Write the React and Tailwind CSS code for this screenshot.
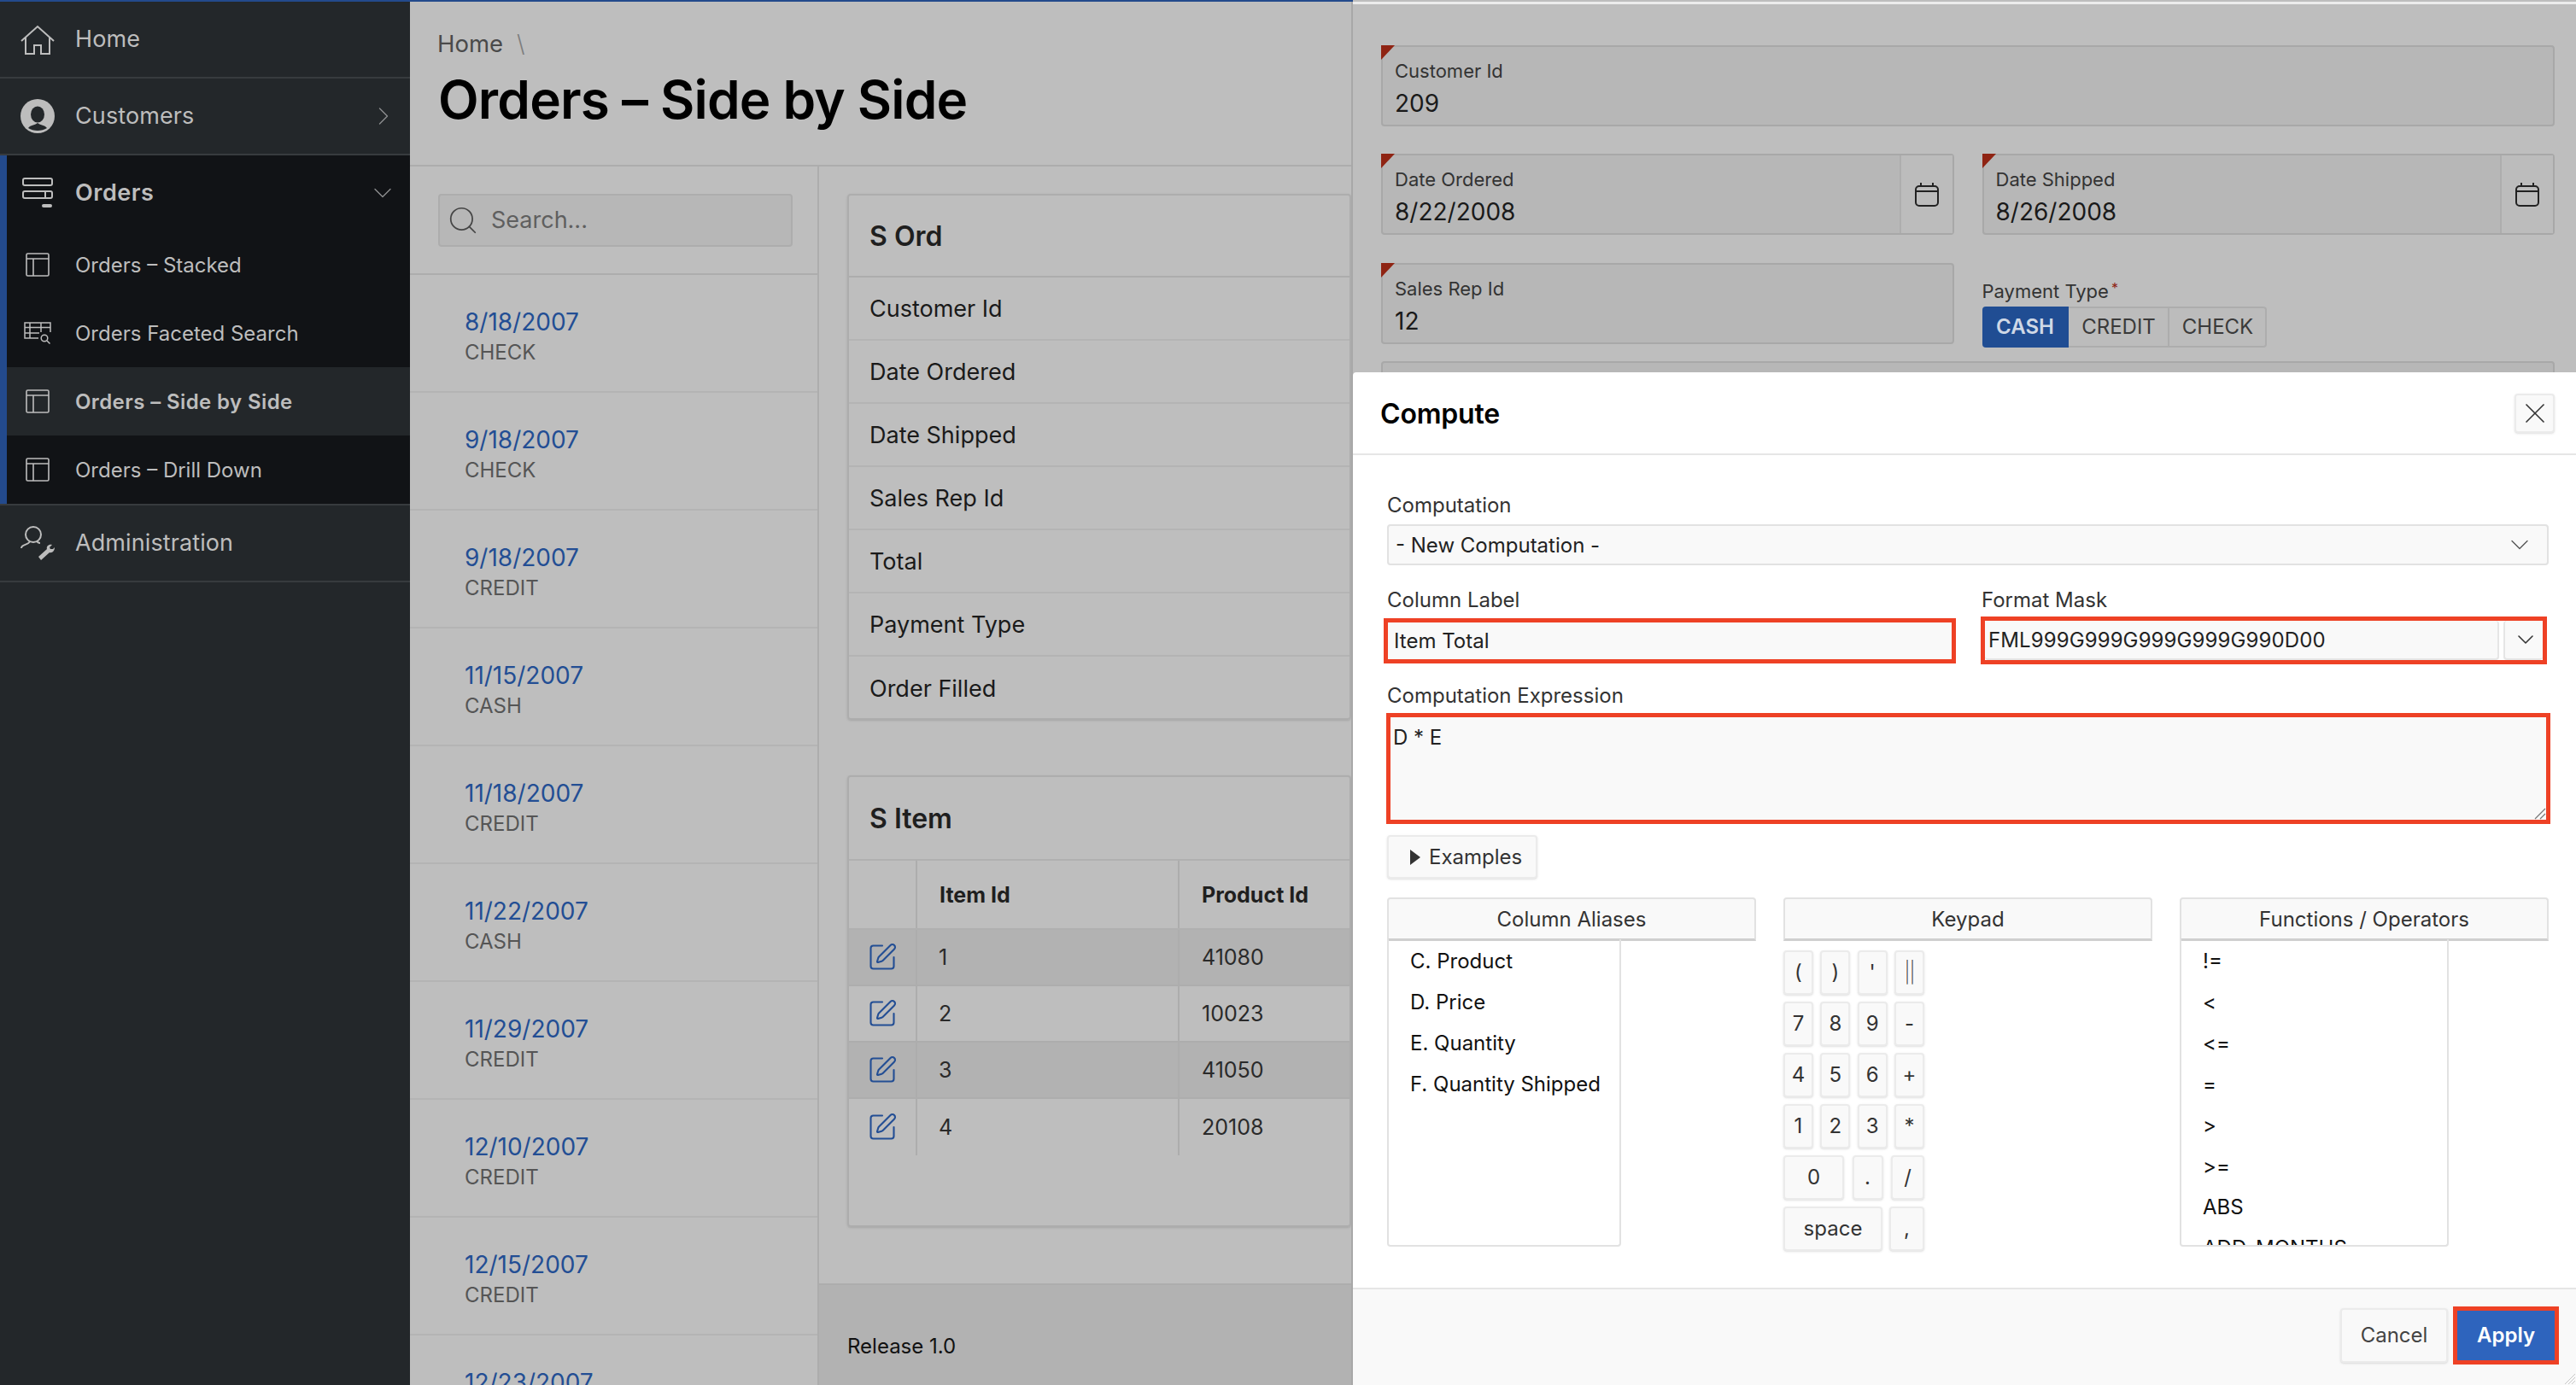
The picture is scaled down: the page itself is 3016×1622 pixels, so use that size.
import { ChevronDown, ChevronRight, Search, SquarePen, X } from "lucide-react";

const fontStack = "font-['Inter','Noto_Sans',sans-serif]";

const orders = [
  ["8/18/2007", "CHECK"],
  ["9/18/2007", "CHECK"],
  ["9/18/2007", "CREDIT"],
  ["11/15/2007", "CASH"],
  ["11/18/2007", "CREDIT"],
  ["11/22/2007", "CASH"],
  ["11/29/2007", "CREDIT"],
  ["12/10/2007", "CREDIT"],
  ["12/15/2007", "CREDIT"],
  ["12/23/2007", "CREDIT"],
];

const ordFields = ["Customer Id", "Date Ordered", "Date Shipped", "Sales Rep Id", "Total", "Payment Type", "Order Filled"];

const items = [
  ["1", "41080"],
  ["2", "10023"],
  ["3", "41050"],
  ["4", "20108"],
];

const aliases = ["C. Product", "D. Price", "E. Quantity", "F. Quantity Shipped"];
const functions = ["!=", "<", "<=", "=", ">", ">=", "ABS", "ADD_MONTHS"];

const keypad = [
  [["(", 35], [")", 35], ["'", 35], ["||", 35]],
  [["7", 35], ["8", 35], ["9", 35], ["-", 35]],
  [["4", 35], ["5", 35], ["6", 35], ["+", 35]],
  [["1", 35], ["2", 35], ["3", 35], ["*", 35]],
  [["0", 71], [".", 36], ["/", 39]],
  [["space", 116], [",", 41]],
];

const HomeIcon = () => (
  <svg width="40" height="35" viewBox="0 0 40 35" fill="none" stroke="currentColor" strokeWidth="2">
    <path d="M1 19 20 2l19 17M6 15v19h10V24h8v10h10V15" />
  </svg>
);

const UserIcon = () => (
  <svg width="40" height="40" viewBox="0 0 40 40">
    <circle cx="20" cy="20" r="20" fill="currentColor" />
    <ellipse cx="20" cy="18" rx="8" ry="9.500" fill="#23272a" />
    <path d="M9 34c3-4 7-3 11-6 4 3 8 2 11 6-6 4-16 4-22 0z" fill="#23272a" />
  </svg>
);

const OrdersIcon = () => (
  <svg width="36" height="36" viewBox="0 0 36 36" fill="none" stroke="currentColor" strokeWidth="2">
    <rect x="1" y="1" width="34" height="8" rx="2" />
    <rect x="1" y="16" width="34" height="8" rx="2" />
    <path d="M27 16v8" />
    <rect x="23" y="31" width="12" height="4" rx="2" fill="currentColor" strokeWidth="0" />
  </svg>
);

const PageIcon = () => (
  <svg width="28" height="28" viewBox="0 0 28 28" fill="none" stroke="currentColor" strokeWidth="1.600">
    <rect x="1" y="1" width="26" height="26" rx="1.500" />
    <path d="M1 7h26M9 7v20" />
  </svg>
);

const FacetIcon = () => (
  <svg width="32" height="26" viewBox="0 0 32 26" fill="none" stroke="currentColor" strokeWidth="1.500">
    <path d="M17 19H1V1h30v11M1 6.500h30M1 13h17M7 1v18M20 1v11" />
    <circle cx="24" cy="19" r="3.800" />
    <path d="m27 22 3.500 3.500" />
  </svg>
);

const AdminIcon = () => (
  <svg width="40" height="40" viewBox="0 0 40 40" fill="none" stroke="currentColor" strokeWidth="2">
    <circle cx="15" cy="10" r="9" />
    <path d="M1 26c0-5 8-3 10-8M19 18c1 1 2 2 4 2" />
    <path d="M21 36 31 27c-1-3 2-6 6-5l-3 3 1 2 3 0 2-2c0 4-3 7-6 6L24 40z" fill="currentColor" strokeWidth="0" />
  </svg>
);

const CalendarIcon = () => (
  <svg width="28" height="28" viewBox="0 0 28 28" fill="none" stroke="currentColor" strokeWidth="2">
    <rect x="1" y="4" width="26" height="23" rx="4" />
    <path d="M1 10h26M7 0v4M21 0v4" />
  </svg>
);

const NavRow = ({ icon, label, chevron }) => (
  <div className="flex h-[90px] shrink-0 items-center border-b-2 border-[#373b3e] bg-[#23272a]">
    <div className="flex w-[88px] justify-center text-[#bdbdbd]">{icon}</div>
    <span className="flex-1 pt-[1px] text-[27px] tracking-[0.1px] text-[#bdbdbd]">{label}</span>
    {chevron}
  </div>
);

const SubRow = ({ icon, label, active }) => (
  <div className={`flex h-[80px] items-center ${active ? "bg-[#23272a]" : ""}`}>
    <div className="flex w-[80px] justify-center pr-[8px] text-[#bdbdbd]">{icon}</div>
    <span className={`pt-[1px] text-[24px] text-[#bdbdbd] ${active ? "font-semibold tracking-[0.4px]" : ""}`}>{label}</span>
  </div>
);

const Sidebar = () => (
  <aside className="flex h-full w-[480px] shrink-0 flex-col bg-[#23272a]">
    <NavRow icon={<HomeIcon />} label="Home" />
    <NavRow
      icon={<UserIcon />}
      label="Customers"
      chevron={<ChevronRight size={36} strokeWidth={0.9} className="mr-[13px] text-[#8d8f90]" />}
    />
    <div className="shrink-0 border-b-2 border-[#373b3e]">
      <div className="border-l-[8px] border-[#234a8c] bg-[#111316]">
        <div className="flex h-[88px] items-center">
          <div className="flex w-[80px] justify-center pr-[8px] text-[#bdbdbd]">
            <OrdersIcon />
          </div>
          <span className="flex-1 pt-[1px] text-[27px] font-semibold tracking-[0.5px] text-[#bdbdbd]">Orders</span>
          <ChevronDown size={36} strokeWidth={0.9} className="mr-[14px] text-[#8d8f90]" />
        </div>
        <SubRow icon={<PageIcon />} label="Orders – Stacked" />
        <SubRow icon={<FacetIcon />} label="Orders Faceted Search" />
        <SubRow icon={<PageIcon />} label="Orders – Side by Side" active />
        <SubRow icon={<PageIcon />} label="Orders – Drill Down" />
      </div>
    </div>
    <NavRow icon={<AdminIcon />} label="Administration" />
  </aside>
);

const OrderList = () => (
  <div className="flex w-[479px] shrink-0 flex-col border-r-2 border-[#adadad]">
    <div className="h-[127px] shrink-0 border-b-2 border-[#adadad] pl-[33px] pt-[32px]">
      <div className="flex h-[62px] w-[415px] items-center rounded-sm border-2 border-[#adadad] bg-[#b7b7b7] pl-[8px] text-[#454545]">
        <Search size={38} strokeWidth={1.1} />
        <span className="ml-[14px] pt-[1px] text-[27px] text-[#5f5f5f]">Search...</span>
      </div>
    </div>
    {orders.map(([date, type], i) => (
      <div key={i} className="h-[138px] shrink-0 border-b-2 border-[#b4b4b4] pl-[64px] pt-[37px]">
        <div className="text-[28px] leading-[36px] text-[#234e94]">{date}</div>
        <div className="mt-[2px] text-[24px] leading-[32px] text-[#555555]">{type}</div>
      </div>
    ))}
  </div>
);

const OrderCard = () => (
  <div className="h-[616px] rounded-sm border-2 border-[#adadad] shadow-sm">
    <div className="flex h-[96px] items-center border-b-2 border-[#adadad] pl-[24px] pt-[1px] text-[32px] font-semibold text-[#1f1f1f]">
      S Ord
    </div>
    {ordFields.map((name) => (
      <div key={name} className="flex h-[74px] items-center border-b-2 border-[#b4b4b4] pl-[24px] pt-[2px] text-[27px] text-[#1a1a1a] last:border-b-0">
        {name}
      </div>
    ))}
  </div>
);

const ItemCard = () => (
  <div className="mt-[65px] h-[529px] rounded-sm border-2 border-[#adadad] shadow-sm">
    <div className="flex h-[98px] items-center border-b-2 border-[#b0b0b0] pl-[24px] pt-[1px] text-[32px] font-semibold text-[#1f1f1f]">
      S Item
    </div>
    <div className="flex h-[81px] border-b-2 border-[#b0b0b0] text-[25px] font-bold text-[#1f1f1f]">
      <div className="w-[80px] border-r-2 border-[#adadad]" />
      <div className="flex w-[307px] items-center border-r-2 border-[#adadad] pl-[26px] pt-[2px]">Item Id</div>
      <div className="flex flex-1 items-center pl-[26px] pt-[2px]">Product Id</div>
    </div>
    {items.map(([id, product], i) => (
      <div key={id} className={`flex h-[66px] text-[25px] text-[#2a2a2a] ${i % 2 === 0 ? "bg-[#b2b2b2]" : ""} ${i < 3 ? "border-b-2 border-[#adadad]" : ""}`}>
        <div className="flex w-[80px] items-center justify-center border-r-2 border-[#adadad] text-[#234e94]">
          <SquarePen size={36} strokeWidth={1.4} />
        </div>
        <div className="flex w-[307px] items-center border-r-2 border-[#adadad] pl-[25px] pt-[2px]">{id}</div>
        <div className="flex flex-1 items-center pl-[26px] pt-[2px]">{product}</div>
      </div>
    ))}
  </div>
);

const MainArea = () => (
  <main className="flex h-full w-[1104px] shrink-0 flex-col border-r-2 border-[#a8a8a8] bg-[#bebebe]">
    <header className="h-[193px] shrink-0 border-b-2 border-[#adadad] pl-[32px] pt-[29px]">
      <div className="flex items-center text-[27.500px] leading-[40px] text-[#4a4a4a]">
        Home
        <span className="ml-[16px] font-light text-[#7d7d7d]">\</span>
      </div>
      <h1 className="mt-[10px] pl-[1px] text-[62px] font-semibold leading-[72px] tracking-[-0.8px] text-black">Orders – Side by Side</h1>
    </header>
    <div className="flex min-h-0 flex-1 overflow-hidden">
      <OrderList />
      <div className="flex min-w-0 flex-1 flex-col">
        <div className="h-[1308px] shrink-0 pl-[33px] pt-[32px]">
          <OrderCard />
          <ItemCard />
        </div>
        <div className="flex flex-1 items-center border-t-2 border-[#adadad] bg-[#b2b2b2] pl-[33px] pt-[26px] text-[24px] text-[#111]">
          Release 1.0
        </div>
      </div>
    </div>
  </main>
);

const Corner = () => (
  <svg width="16" height="17" viewBox="0 0 16 17" className="absolute -left-[2px] -top-[2px]">
    <path d="M0 0h16L0 17z" fill="#8f2413" />
  </svg>
);

const FloatField = ({ label, value, calendar, className }) => (
  <div className={`relative flex h-[95px] rounded-sm border-2 border-[#a8a8a8] bg-[#b7b7b7] ${className}`}>
    <Corner />
    <div className="flex-1 pl-[14px] pt-[14px]">
      <div className="text-[22px] leading-[28px] text-[#333]">{label}</div>
      <div className="mt-[6px] text-[28px] leading-[36px] text-[#1a1a1a]">{value}</div>
    </div>
    {calendar && (
      <div className="flex w-[62px] items-center justify-center border-l-2 border-[#adadad] bg-[#bcbcbc] text-[#222]">
        <CalendarIcon />
      </div>
    )}
  </div>
);

const BackForm = () => (
  <section className="h-full flex-1 border-t-[3px] border-[#ececec] bg-[#bebebe] pl-[33px] pr-[25px] pt-[48px]">
    <FloatField label="Customer Id" value="209" />
    <div className="mt-[32px] grid grid-cols-2 gap-x-[33px]">
      <FloatField label="Date Ordered" value="8/22/2008" calendar />
      <FloatField label="Date Shipped" value="8/26/2008" calendar />
    </div>
    <div className="mt-[33px] grid grid-cols-2 gap-x-[33px]">
      <FloatField label="Sales Rep Id" value="12" />
      <div className="pt-[17px]">
        <div className="text-[22px] leading-[32px] text-[#333]">
          Payment Type <span className="relative -top-[6px] -ml-[3px] text-[16px] text-[#8f2413]">*</span>
        </div>
        <div className="flex h-[48px] text-[24px]">
          <div className="flex w-[101px] items-center justify-center rounded-l-sm bg-[#204d93] font-semibold text-[#cfd8e6]">CASH</div>
          <div className="flex w-[118px] items-center justify-center border-2 border-l-0 border-[#adadad] bg-[#bcbcbc] pl-[2px] text-[#3a3a3a]">CREDIT</div>
          <div className="flex w-[114px] items-center justify-center rounded-r-sm border-2 border-l-0 border-[#adadad] bg-[#bcbcbc] pl-[2px] text-[#3a3a3a]">CHECK</div>
        </div>
      </div>
    </div>
    <div className="mt-[16px] h-[60px] rounded-sm border-2 border-[#a8a8a8] bg-[#b7b7b7]" />
  </section>
);

const Label = ({ children }) => <div className="text-[24px] leading-[32px] text-[#333]">{children}</div>;

const PanelHead = ({ children }) => (
  <div className="flex h-[51px] items-center justify-center rounded-t-sm border-2 border-b-[3px] border-[#e2e2e2] border-b-[#cfcfcf] bg-[#f9f9f9] pt-[1px] text-[24px] text-[#333]">
    {children}
  </div>
);

const PickList = ({ width, rows }) => (
  <div className={`-mt-[2px] h-[360px] overflow-hidden rounded-b-sm border-2 border-t-0 border-[#e2e2e2] pt-[2px] ${width}`}>
    {rows.map((row) => (
      <div key={row} className="flex h-[48px] shrink-0 items-center pl-[25px] text-[24px] text-[#111]">
        {row}
      </div>
    ))}
  </div>
);

const Keypad = () => (
  <div className="flex flex-col gap-[8px] pt-[11px]">
    {keypad.map((row, i) => (
      <div key={i} className="flex w-[165px] justify-between">
        {row.map(([key, w]) => (
          <div
            key={key}
            style={{ width: w }}
            className={`flex h-[52px] items-center justify-center rounded-[4px] border-2 border-[#ebebeb] bg-[#f9f9f9] text-[24px] text-[#333] shadow-sm ${key === "||" ? "font-extralight tracking-[-1px]" : ""}`}
          >
            {key}
          </div>
        ))}
      </div>
    ))}
  </div>
);

const ComputeDialog = () => (
  <div className="absolute left-[1584px] top-[436px] flex h-[1186px] w-[1432px] flex-col rounded-tl bg-white">
    <div className="flex h-[97px] shrink-0 items-center justify-between border-b-2 border-[#e6e6e6] pl-[32px] pr-[25px]">
      <h2 className="pt-[2px] text-[32px] font-semibold tracking-[-0.2px] text-black">Compute</h2>
      <div className="flex h-[46px] w-[47px] items-center justify-center rounded-sm border-2 border-[#ebebeb] bg-[#f9f9f9] text-[#333] shadow-sm">
        <X size={40} strokeWidth={1} />
      </div>
    </div>
    <div className="flex-1 overflow-hidden pl-[40px] pr-[32px] pt-[43px]">
      <Label>Computation</Label>
      <div className="mt-[6px] flex h-[48px] items-center justify-between rounded-sm border-2 border-[#e2e2e2] bg-[#f9f9f9] pl-[8px] pr-[14px] text-[24px] text-[#222]">
        <span className="pt-[2px]">- New Computation -</span>
        <ChevronDown size={36} strokeWidth={0.9} className="text-[#555]" />
      </div>
      <div className="mt-[25px] flex">
        <div className="w-[696px] shrink-0">
          <Label>Column Label</Label>
          <div className="-ml-[4px] mt-[5px] flex h-[53px] w-[670px] items-center border-[5px] border-[#ee4125] bg-[#f9f9f9] pl-[7px] text-[24px] text-[#222]">
            Item Total
          </div>
        </div>
        <div className="flex-1">
          <Label>Format Mask</Label>
          <div className="-ml-[1px] mt-[3px] flex h-[56px] w-[663px] border-[5px] border-[#ee4125] bg-white">
            <div className="flex flex-1 items-center rounded-sm border-b-2 border-r-2 border-[#e6e6e6] bg-[#f9f9f9] pl-[4px] pt-[2px] text-[24px] tracking-[0.1px] text-[#222]">
              FML999G999G999G999G990D00
            </div>
            <div className="ml-[5px] flex w-[46px] items-center justify-center rounded-sm border-b-2 border-l-2 border-[#e6e6e6] bg-[#f9f9f9] pl-[4px] text-[#333]">
              <ChevronDown size={32} strokeWidth={1.2} />
            </div>
          </div>
        </div>
      </div>
      <div className="mt-[21px]">
        <Label>Computation Expression</Label>
      </div>
      <div className="relative -ml-[1px] mt-[4px] h-[130px] w-[1363px] border-[5px] border-[#ee4125] bg-[#f9f9f9] pl-[3px] pt-[8px] text-[24px] leading-[32px] text-[#222]">
        D * E
        <svg width="14" height="14" viewBox="0 0 14 14" className="absolute bottom-0 right-0" stroke="#777" strokeWidth="1.200">
          <path d="M1 13 13 1M7 13l6-6" />
        </svg>
      </div>
      <div className="mt-[13px] flex h-[51px] w-[176px] items-center rounded-sm border-2 border-[#ebebeb] bg-[#f9f9f9] pl-[25px] text-[24px] text-[#333] shadow-sm">
        <svg width="12" height="18" viewBox="0 0 12 18" className="mr-[10px]" fill="currentColor">
          <path d="M0 0l12 9-12 9z" />
        </svg>
        Examples
      </div>
      <div className="mt-[22px] grid grid-cols-3 gap-x-[32px]">
        <div>
          <PanelHead>Column Aliases</PanelHead>
          <PickList width="w-[274px]" rows={aliases} />
        </div>
        <div>
          <PanelHead>Keypad</PanelHead>
          <Keypad />
        </div>
        <div>
          <PanelHead>Functions / Operators</PanelHead>
          <PickList width="w-[315px]" rows={functions} />
        </div>
      </div>
    </div>
    <div className="relative flex h-[114px] shrink-0 items-center justify-end gap-[6px] border-t-2 border-[#e6e6e6] bg-[#f9f9f9] pb-[5px] pr-[20px]">
      <div className="flex h-[64px] w-[126px] items-center justify-center rounded-sm border-2 border-[#ebebeb] bg-[#f9f9f9] text-[24px] text-[#444] shadow-sm">
        Cancel
      </div>
      <div className="flex h-[68px] w-[124px] items-center justify-center border-[5px] border-[#ee4125] bg-[#2e64bd] text-[24px] font-semibold text-white">
        Apply
      </div>
      <svg width="14" height="14" viewBox="0 0 14 14" className="absolute bottom-0 right-0" stroke="#c8c8c8" strokeWidth="1">
        <path d="M1 13 13 1M5 13l8-8M9 13l4-4" />
      </svg>
    </div>
  </div>
);

export default function App() {
  return (
    <div className={`relative flex h-[1622px] w-[3016px] flex-col overflow-hidden bg-[#bebebe] ${fontStack}`}>
      <div className="h-[2px] w-[1584px] shrink-0 bg-[#234a8c]" />
      <div className="flex min-h-0 flex-1">
        <Sidebar />
        <MainArea />
        <BackForm />
      </div>
      <ComputeDialog />
    </div>
  );
}
